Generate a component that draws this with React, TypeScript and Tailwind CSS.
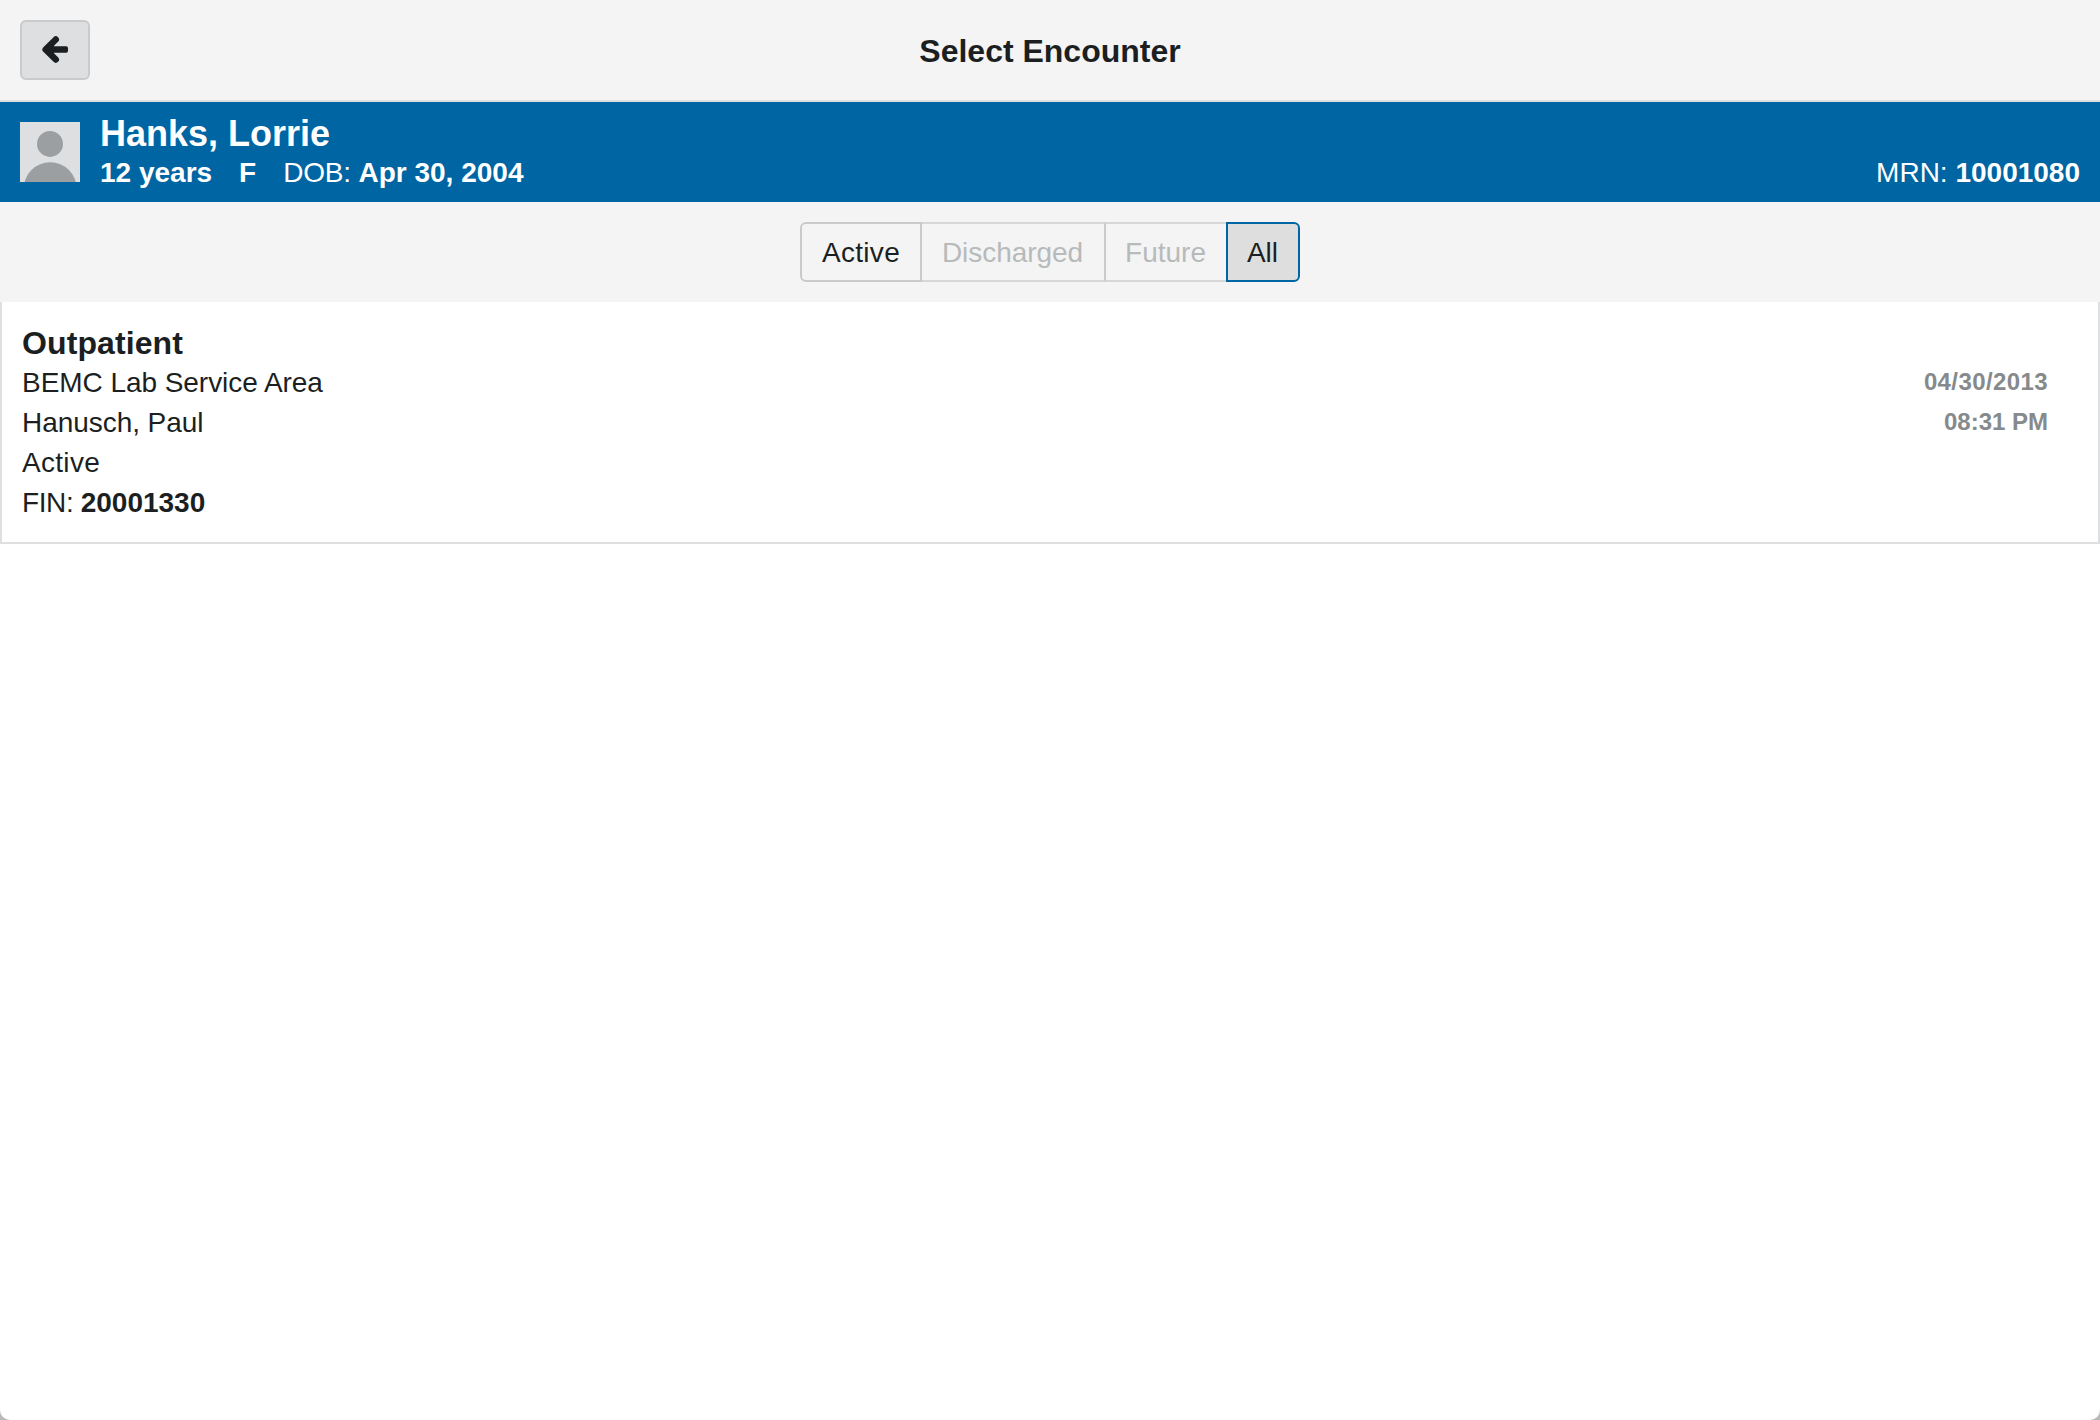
const details = [
  { text: "BEMC Lab Service Area", tracking: "tracking-[-0.05px]" },
  { text: "Hanusch, Paul", tracking: "tracking-[-0.05px]" },
  { text: "Active", tracking: "tracking-[0.3px]" },
];

function BackButton() {
  return (
    <button
      aria-label="Back"
      className="flex h-[60px] w-[70px] items-center justify-center rounded-md border-2 border-[#c8cacb] bg-[#dedfe1]"
    >
      <svg width="28" height="28" viewBox="0 0 28 28" fill="none">
        <path
          d="M14.8 3.4 L4.6 13.5 L14.8 23.6"
          stroke="#1c1f21"
          strokeWidth="6.4"
          strokeLinecap="round"
          strokeLinejoin="round"
        />
        <path d="M5 13.5 L13 7.5 V19.5 Z" fill="#1c1f21" />
        <rect x="6" y="10.2" width="21" height="6.6" rx="1.8" fill="#1c1f21" />
      </svg>
    </button>
  );
}

function Avatar() {
  return (
    <svg width="60" height="60" viewBox="0 0 60 60" className="shrink-0 bg-[#dedfe1]">
      <circle cx="30" cy="21.9" r="13" fill="#9b9fa1" />
      <circle cx="30.2" cy="66.8" r="26.5" fill="#9b9fa1" />
    </svg>
  );
}

export default function App() {
  return (
    <div className="h-[1420px] w-[2100px] overflow-hidden bg-[#b9b9b9] font-['Liberation_Sans',Arial,sans-serif] text-[28px] leading-10 text-[#1c1f21]">
      <div className="flex h-full flex-col overflow-hidden rounded-b-[10px] bg-white">
        <header className="grid h-[102px] shrink-0 grid-cols-[1fr_auto_1fr] items-center border-b-2 border-[#dedfe0] bg-[#f4f4f4] px-5">
          <BackButton />
          <h1 className="pt-0.5 text-[32px] leading-10 font-bold">Select Encounter</h1>
        </header>

        <section className="flex h-[100px] shrink-0 items-center bg-[#0065a3] px-5 text-white">
          <Avatar />
          <div className="ml-5 flex-1 self-start pt-3">
            <h2 className="text-[36px] leading-10 font-bold">Hanks, Lorrie</h2>
            <div className="flex leading-[38px]">
              <b className="mr-[27px]">12 years</b>
              <b className="mr-[27px]">F</b>
              <span>
                <span className="tracking-[-0.2px]">DOB: </span>
                <b>Apr 30, 2004</b>
              </span>
            </div>
          </div>
          <div className="self-start pt-[52px] leading-[38px]">
            MRN: <b>10001080</b>
          </div>
        </section>

        <nav className="flex h-[100px] shrink-0 items-center justify-center bg-[#f4f4f4]">
          <button className="h-[60px] w-[122px] rounded-l-md border-2 border-[#c8cacb] pt-0.5 tracking-[0.3px]">
            Active
          </button>
          <button className="h-[60px] w-[184px] border-y-2 border-r-2 border-y-[#d6d7d8] border-r-[#c8cacb] pt-0.5 pr-px tracking-[-0.05px] text-[#b7babb]">
            Discharged
          </button>
          <button className="h-[60px] w-[120px] border-y-2 border-[#d6d7d8] pt-0.5 pr-px text-[#b7babb]">Future</button>
          <button className="h-[60px] w-[74px] rounded-r-md border-2 border-[#0065a3] bg-[#dedede] pt-0.5 pr-px">
            All
          </button>
        </nav>

        <article className="flex h-[242px] shrink-0 justify-between border-x-2 border-b-2 border-[#dedfe0] pt-[21px] pr-[50px] pl-5">
          <div>
            <h3 className="text-[32px] leading-10 font-bold tracking-[0.1px]">Outpatient</h3>
            {details.map(({ text, tracking }) => (
              <p key={text} className={tracking}>
                {text}
              </p>
            ))}
            <p>
              <span className="tracking-[-0.4px]">FIN: </span>
              <b>20001330</b>
            </p>
          </div>
          <div className="pt-[39px] text-right text-[24px] leading-10 font-bold text-[#868a8c]">
            <p className="tracking-[0.4px]">04/30/2013</p>
            <p>08:31 PM</p>
          </div>
        </article>
      </div>
    </div>
  );
}
